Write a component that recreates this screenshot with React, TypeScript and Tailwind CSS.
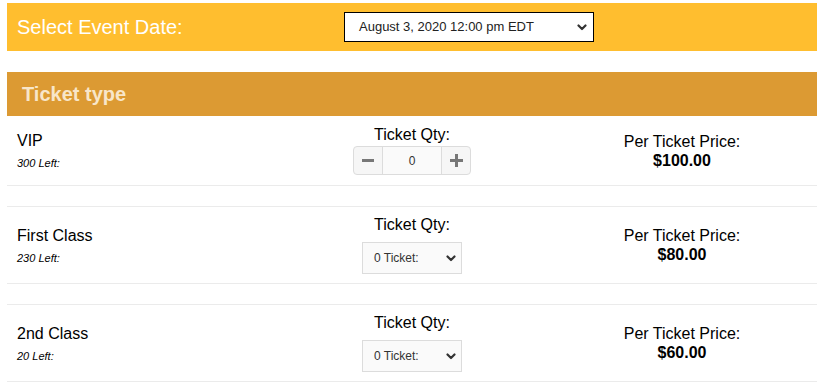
import React from "react";

function Chevron({ className = "" }: { className?: string }) {
  return (
    <svg width="10" height="7" viewBox="0 0 10 7" className={className}>
      <polyline points="1.5,1.5 5,5 8.5,1.5" fill="none" stroke="currentColor" strokeWidth="2.2" strokeLinecap="round" strokeLinejoin="round" />
    </svg>
  );
}

function QtySelect() {
  return (
    <div className="mx-auto mt-[8px] w-[100px] h-[32px] border border-[#dcdcdc] bg-[#fafafa] flex items-center justify-between pl-[11px] pr-[5px] text-[12px] text-[#333]">
      <span>0 Ticket:</span>
      <Chevron className="text-[#333]" />
    </div>
  );
}

function Stepper() {
  return (
    <div className="mx-auto mt-[2px] w-[118px] h-[29px] border border-[#dcdcdc] rounded-[4px] flex overflow-hidden bg-[#f6f6f6]">
      <div className="w-[29px] flex items-center justify-center border-r border-[#dcdcdc]">
        <span className="block w-[12px] h-[3px] bg-[#777]" />
      </div>
      <div className="flex-1 flex items-center justify-center bg-[#fafafa] text-[12px] text-[#333]">0</div>
      <div className="w-[29px] flex items-center justify-center border-l border-[#dcdcdc]">
        <span className="relative block w-[13px] h-[13px]">
          <span className="absolute left-0 top-[5px] w-[13px] h-[3px] bg-[#777]" />
          <span className="absolute top-0 left-[5px] w-[3px] h-[13px] bg-[#777]" />
        </span>
      </div>
    </div>
  );
}

type Row = { name: string; left: string; price: string; stepper?: boolean };

const rows: Row[] = [
  { name: "VIP", left: "300 Left:", price: "$100.00", stepper: true },
  { name: "First Class", left: "230 Left:", price: "$80.00" },
  { name: "2nd Class", left: "20 Left:", price: "$60.00" },
];

export default function App() {
  return (
    <div className="w-[824px] h-[389px] bg-white pt-[3px] px-[7px] font-['Liberation_Sans',Arial,sans-serif] text-black overflow-hidden">
      <div className="w-[810px] h-[48px] bg-[#FFBE2F] flex items-center">
        <div className="w-[337px] pl-[10px] text-white text-[20px] leading-none">Select Event Date:</div>
        <div className="w-[250px] h-[30px] border border-black bg-white flex items-center justify-between pl-[14px] pr-[6px] text-[13px] text-[#222]">
          <span>August 3, 2020 12:00 pm EDT</span>
          <Chevron className="text-[#333]" />
        </div>
      </div>
      <div className="w-[810px] mt-[21px] h-[44px] bg-[#DC9A33] flex items-center pl-[15px] text-[20px] font-bold text-[#F8E6C9]">
        Ticket type
      </div>
      {rows.map((r, i) => (
        <div
          key={r.name}
          className={
            i === 0
              ? "w-[810px] h-[70px] border-b border-[#ebebeb] grid grid-cols-3 items-center"
              : "w-[810px] h-[78px] mt-[20px] border-y border-[#ebebeb] grid grid-cols-3 items-center"
          }
        >
          <div className="pl-[10px] pt-[1px]">
            <div className="text-[16px] leading-[18px]">{r.name}</div>
            <div className="mt-[7px] text-[11px] leading-[13px] italic">{r.left}</div>
          </div>
          <div className="text-center">
            <div className="text-[16px] leading-[18px]">Ticket Qty:</div>
            {r.stepper ? <Stepper /> : <QtySelect />}
          </div>
          <div className="text-center">
            <div className="text-[16px] leading-[19px]">Per Ticket Price:</div>
            <div className="text-[16px] leading-[19px] font-bold">{r.price}</div>
          </div>
        </div>
      ))}
    </div>
  );
}
